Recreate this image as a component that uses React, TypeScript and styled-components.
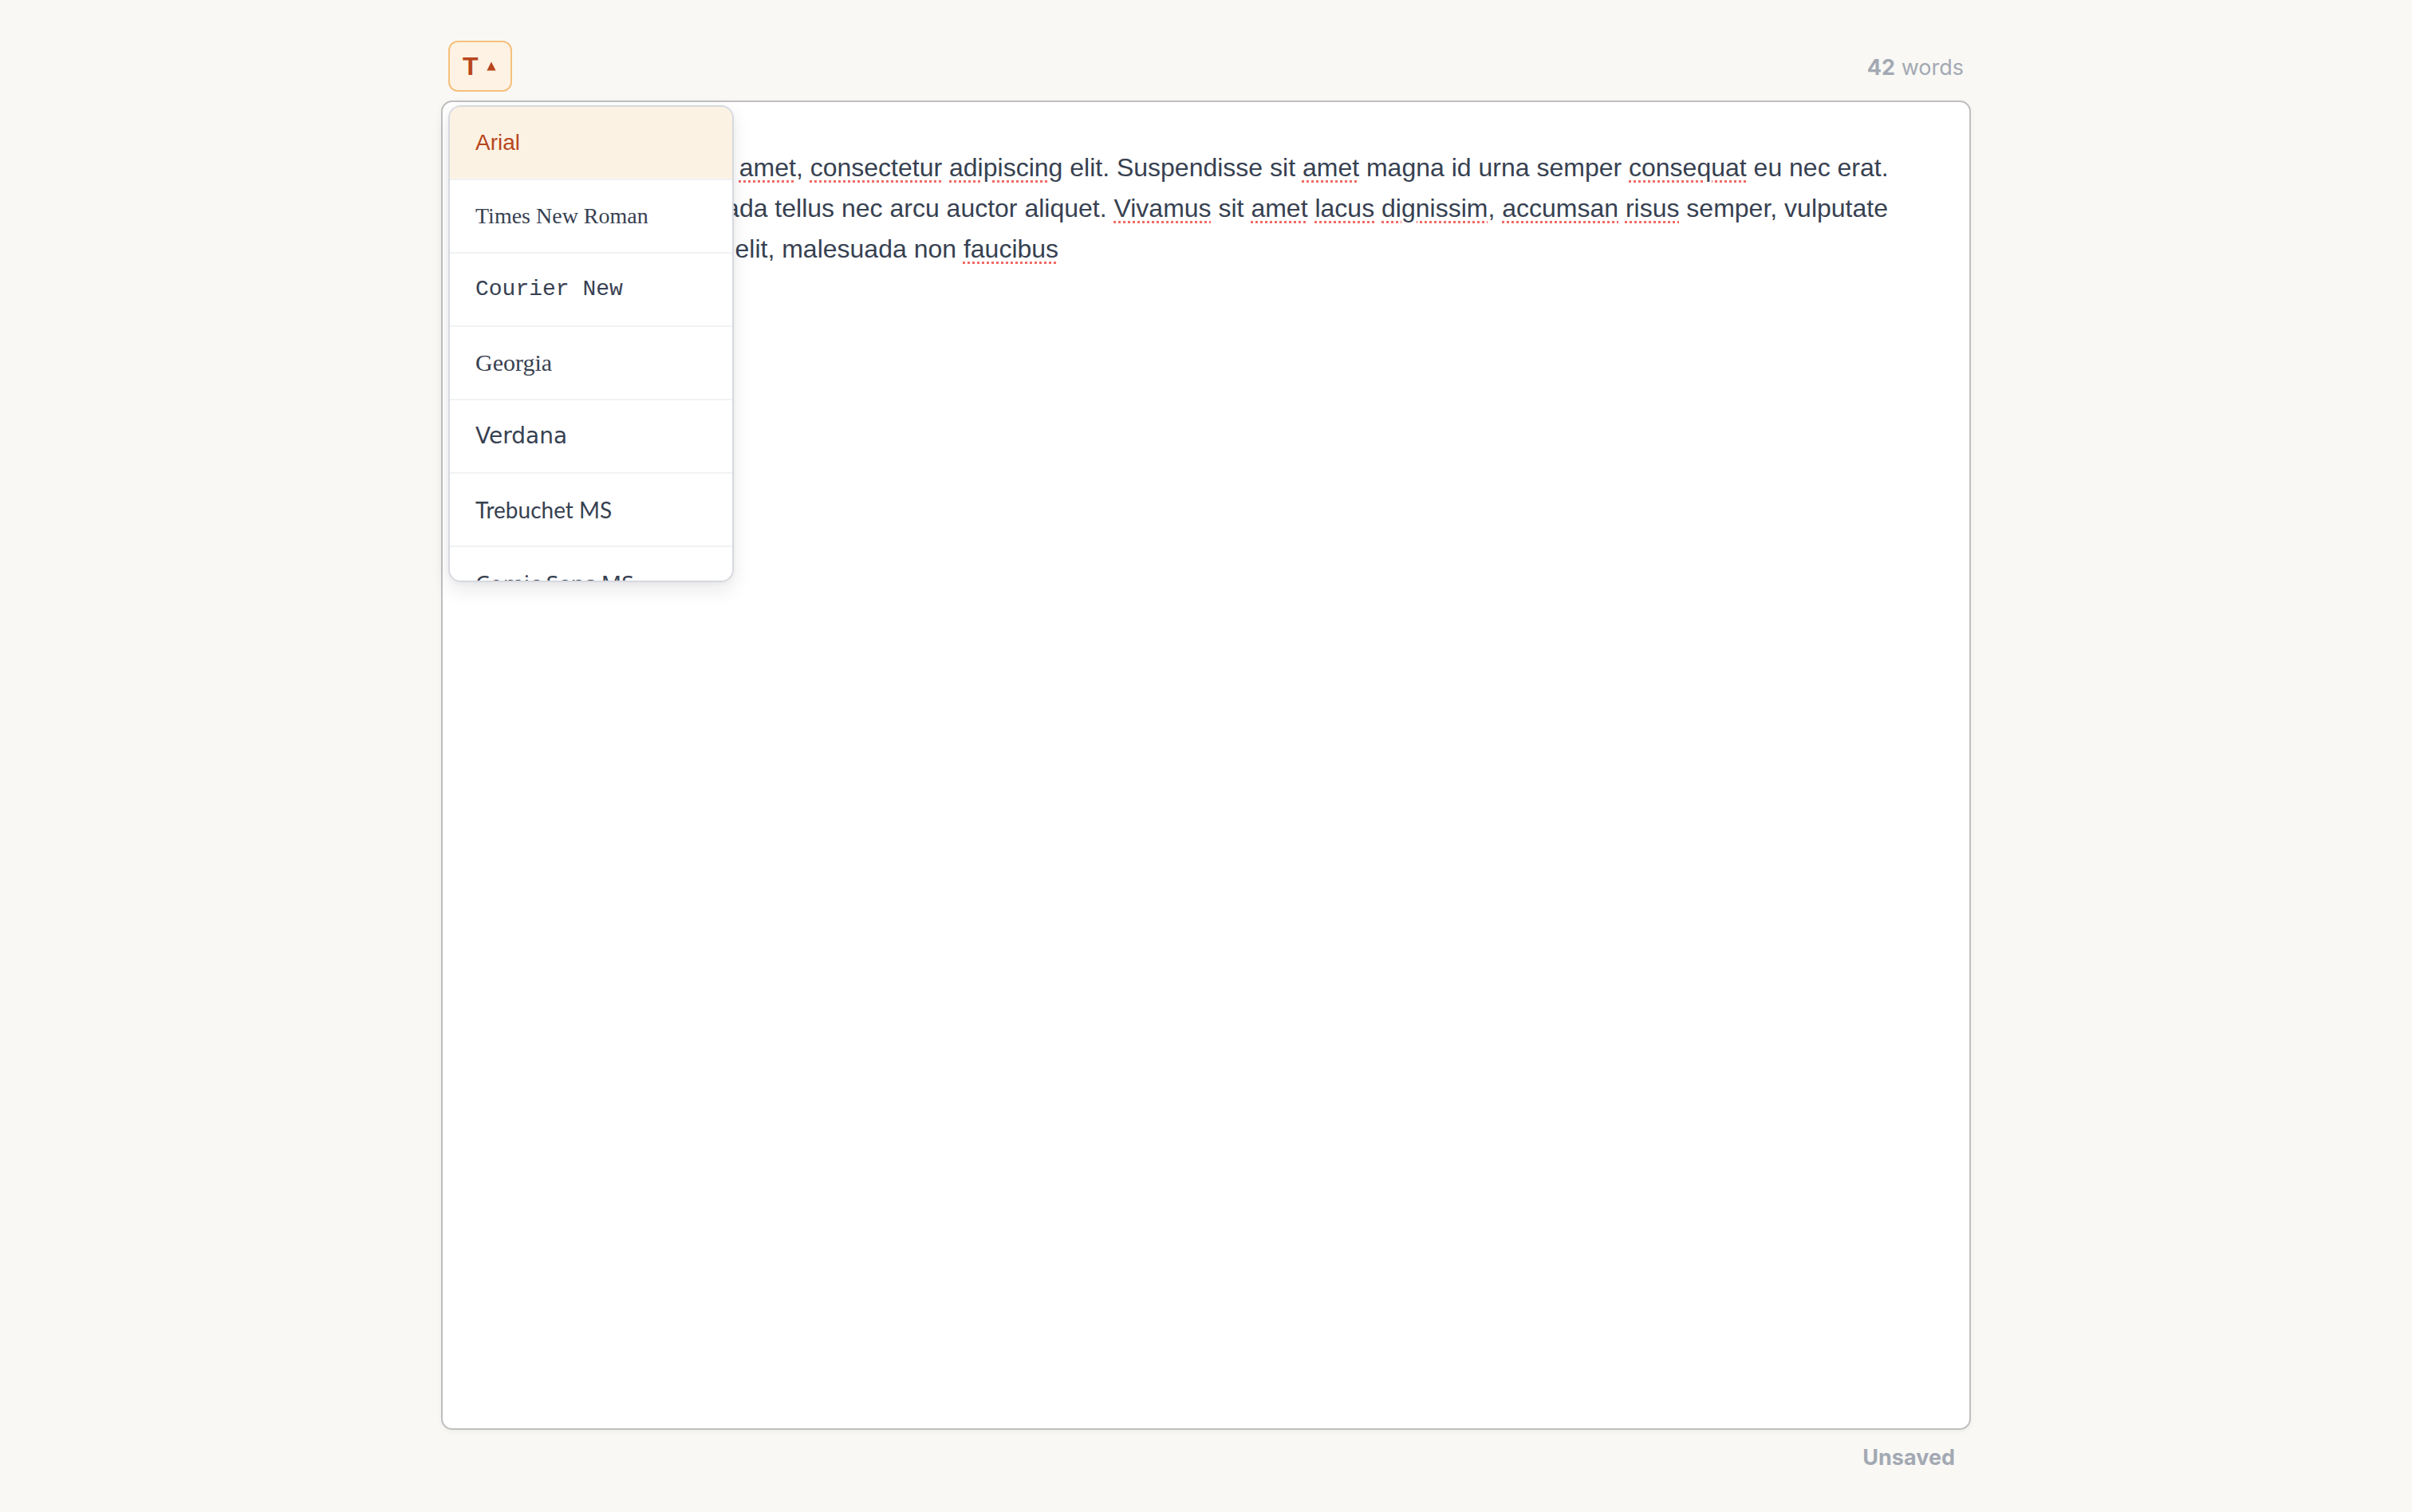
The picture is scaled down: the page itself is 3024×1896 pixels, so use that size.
import React from "react";
import styled, { createGlobalStyle } from "styled-components";

const GlobalStyle = createGlobalStyle`
  html, body {
    margin: 0;
    padding: 0;
    background: #f9f8f5;
  }
  body {
    font-family: Inter, "Liberation Sans", sans-serif;
  }
  * { box-sizing: border-box; }
`;

const Page = styled.div`
  width: 1918px;
  margin: 0 auto;
  padding-top: 51px;
  display: flex;
  flex-direction: column;
`;

const Toolbar = styled.div`
  height: 64px;
  margin-bottom: 11px;
  padding: 0 9px;
  display: flex;
  align-items: center;
  justify-content: space-between;
  position: relative;
  z-index: 2;
`;

const FontPicker = styled.div`
  position: relative;
  height: 64px;
`;

const ToolButton = styled.button`
  height: 64px;
  width: 80px;
  padding: 0 17px 0 16px;
  display: inline-flex;
  align-items: center;
  gap: 10px;
  background: #fdf2e3;
  border: 2px solid #f5c07e;
  border-radius: 12px;
  color: #b8461c;
  font-family: "Liberation Sans", Arial, sans-serif;
  font-weight: 700;
  font-size: 32px;
  line-height: 1;
  cursor: pointer;
`;

const Caret = styled.svg`
  width: 12px;
  height: 12px;
  flex: none;
  fill: #b8461c;
`;

const Dropdown = styled.div`
  position: absolute;
  top: calc(100% + 17px);
  left: 0;
  width: 358px;
  height: 598px;
  background: #ffffff;
  border: 2px solid #d6d9de;
  border-radius: 16px;
  box-shadow: 0 10px 24px rgba(17, 24, 39, 0.09), 0 2px 6px rgba(17, 24, 39, 0.04);
  overflow: hidden;
`;

const OptionList = styled.div`
  height: 100%;
  overflow-y: auto;
  scrollbar-width: none;
  &::-webkit-scrollbar { display: none; }
`;

const FontOption = styled.div<{ $font: string; $size: number; $selected?: boolean }>`
  height: 92px;
  padding: 0 32px;
  display: flex;
  align-items: center;
  border-bottom: 2px solid #f1f2f4;
  background: ${(p) => (p.$selected ? "#fcf2e4" : "#ffffff")};
  color: ${(p) => (p.$selected ? "#b8461c" : "#374151")};
  font-family: ${(p) => p.$font};
  font-size: ${(p) => p.$size}px;
  line-height: 42px;
  white-space: nowrap;
  cursor: pointer;
`;

const WordCount = styled.div`
  padding-top: 3px;
  color: #a3a9b3;
  font-family: Inter, "Liberation Sans", sans-serif;
  font-size: 27px;
  line-height: 32px;
`;

const Count = styled.span`
  font-weight: 700;
`;

const Editor = styled.div`
  height: 1667px;
  padding: 57px 57px 56px;
  background: #ffffff;
  border: 2px solid #bfbfbf;
  border-radius: 14px;
  box-shadow: 0 2px 6px rgba(0, 0, 0, 0.05);
`;

const EditorText = styled.p`
  margin: 0;
  color: #374151;
  font-family: "Liberation Sans", Arial, sans-serif;
  font-size: 32px;
  line-height: 1.6;
`;

const Misspelled = styled.span`
  text-decoration-line: underline;
  text-decoration-style: dotted;
  text-decoration-color: #f06b66;
  text-decoration-thickness: 3px;
  text-underline-offset: 5px;
`;

const Footer = styled.div`
  margin-top: 19px;
  padding-right: 20px;
  text-align: right;
  color: #a3a9b3;
  font-family: Inter, "Liberation Sans", sans-serif;
  font-weight: 700;
  font-size: 27px;
  line-height: 32px;
`;

const fonts: { name: string; stack: string; size: number }[] = [
  { name: "Arial", stack: `"Liberation Sans", Arial, sans-serif`, size: 28 },
  { name: "Times New Roman", stack: `"Liberation Serif", "Times New Roman", serif`, size: 28 },
  { name: "Courier New", stack: `"Liberation Mono", "Courier New", monospace`, size: 28 },
  { name: "Georgia", stack: `Georgia, "Liberation Serif", serif`, size: 30 },
  { name: "Verdana", stack: `Verdana, "DejaVu Sans", sans-serif`, size: 28 },
  { name: "Trebuchet MS", stack: `"Trebuchet MS", Lato, sans-serif`, size: 28 },
  { name: "Comic Sans MS", stack: `"Comic Sans MS", "Noto Sans", sans-serif`, size: 28 },
  { name: "Impact", stack: `Impact, "DejaVu Sans", sans-serif`, size: 28 },
  { name: "Palatino", stack: `Palatino, "DejaVu Serif", serif`, size: 28 },
];

type Piece = string | { w: string };

const content: Piece[] = [
  { w: "Lorem" }, " ", { w: "ipsum" }, " dolor sit ", { w: "amet" }, ", ",
  { w: "consectetur" }, " ", { w: "adipiscing" }, " elit. Suspendisse sit ",
  { w: "amet" }, " magna id urna semper ", { w: "consequat" },
  " eu nec erat. ", { w: "Pellentesque" }, " malesuada tellus nec arcu auctor aliquet. ",
  { w: "Vivamus" }, " sit ", { w: "amet" }, " ", { w: "lacus" }, " ", { w: "dignissim" }, ", ",
  { w: "accumsan" }, " ", { w: "risus" }, " semper, vulputate ", { w: "aliquam" }, " ",
  { w: "feugiat" }, " tortor elit, malesuada non ", { w: "faucibus" },
];

export default function App() {
  return (
    <>
      <GlobalStyle />
      <Page>
        <Toolbar>
          <FontPicker>
            <ToolButton type="button" aria-label="Font family">
              T
              <Caret viewBox="0 0 12 12" aria-hidden="true">
                <path d="M6 0.6 L11.6 11.4 L0.4 11.4 Z" />
              </Caret>
            </ToolButton>
            <Dropdown>
              <OptionList>
                {fonts.map((f, i) => (
                  <FontOption key={f.name} $font={f.stack} $size={f.size} $selected={i === 0}>
                    {f.name}
                  </FontOption>
                ))}
              </OptionList>
            </Dropdown>
          </FontPicker>
          <WordCount>
            <Count>42</Count> words
          </WordCount>
        </Toolbar>
        <Editor>
          <EditorText>
            {content.map((p, i) =>
              typeof p === "string" ? (
                <React.Fragment key={i}>{p}</React.Fragment>
              ) : (
                <Misspelled key={i}>{p.w}</Misspelled>
              )
            )}
          </EditorText>
        </Editor>
        <Footer>Unsaved</Footer>
      </Page>
    </>
  );
}
